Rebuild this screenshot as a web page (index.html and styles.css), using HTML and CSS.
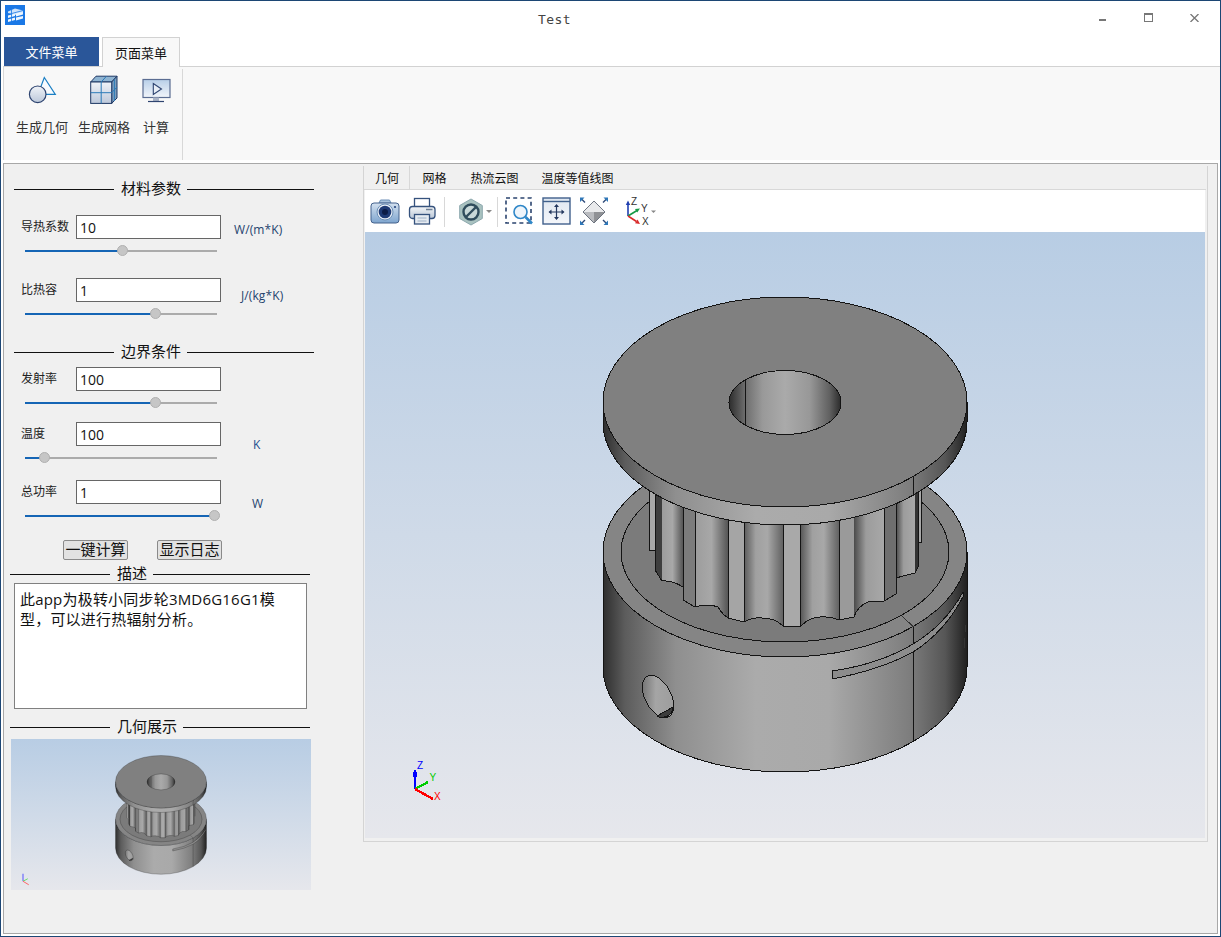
FILE: index.html
```html
<!DOCTYPE html>
<html lang="zh">
<head>
<meta charset="utf-8">
<title>Test</title>
<link rel="stylesheet" href="styles.css">
</head>
<body>
<div class="window">
  <header class="titlebar">
    <svg class="app-icon" width="20" height="20" viewBox="0 0 20 20">
      <rect width="20" height="20" fill="#1a78e6"/>
      <path d="M3 6.500L10 3.500L18 5.500V7.500L10 10L3 8z" fill="#cfe3fa"/>
      <path d="M3 10.500L10 8.500V11L3 13z" fill="#eef6fe"/>
      <path d="M11 8.500L18 7V9.500L11 11.500z" fill="#eef6fe"/>
      <path d="M3 14.500L10 12.500V15L3 17z" fill="#eef6fe"/>
      <path d="M11 12.500L18 11V13.500L11 15.500z" fill="#eef6fe"/>
      <path d="M6.500 5V17M3 9.500L18 5.500" stroke="#1a78e6" stroke-width=".8"/>
    </svg>
    <span class="title">Test</span>
    <div class="controls">
      <span class="ctl-min"></span>
      <span class="ctl-max"></span>
      <svg class="ctl-close" width="9" height="8" viewBox="0 0 9 8"><path d="M.5 0l8 8M8.5 0l-8 8" stroke="#777" stroke-width="1.3"/></svg>
    </div>
  </header>

  <nav class="menu-tabs">
    <span class="menu-file">文件菜单</span>
    <span class="menu-page">页面菜单</span>
  </nav>

  <section class="ribbon">
    <div class="ribbon-group">
      <div class="ribbon-btn btn-geo">
        <svg width="32" height="32" viewBox="0 0 32 32">
          <defs><linearGradient id="ribG" x1="0" y1="0" x2="0" y2="1"><stop offset="0" stop-color="#f0f3f8"/><stop offset="1" stop-color="#bcc8da"/></linearGradient></defs>
          <path d="M18.3 3.500L29.300 20.300H12z" fill="#f8fbfe" stroke="#1b7fc4" stroke-width="1.2"/>
          <circle cx="11.700" cy="20.300" r="8.300" fill="url(#ribG)" stroke="#2e4470" stroke-width="1.2"/>
        </svg>
        <span>生成几何</span>
      </div>
      <div class="ribbon-btn btn-mesh">
        <svg width="32" height="32" viewBox="0 0 32 32">
          <path d="M2.700 8L8 2.200H29L23.700 8z" fill="#8fb4d2" stroke="#1f3864"/>
          <path d="M23.700 8L29 2.200V24L23.700 29.400z" fill="#7c9dbd" stroke="#1f3864"/>
          <rect x="2.700" y="8" width="21" height="21.400" fill="url(#ribG)" stroke="#1f3864"/>
          <path d="M13.200 8V29.400M2.700 18.700H23.700M13.200 8L18.500 2.200M26.400 5.200V27M23.700 18.700L29 13" stroke="#2a7ab8" fill="none"/>
        </svg>
        <span>生成网格</span>
      </div>
      <div class="ribbon-btn btn-calc">
        <svg width="32" height="32" viewBox="0 0 32 32">
          <defs><linearGradient id="ribM" x1="0" y1="0" x2="0" y2="1"><stop offset="0" stop-color="#b8cfe8"/><stop offset="1" stop-color="#f2f5fa"/></linearGradient></defs>
          <rect x="3" y="5.500" width="27" height="18" fill="url(#ribM)" stroke="#5b6d92" stroke-width="1.2"/>
          <path d="M13.300 9.500L21.500 15L13.300 20.500z" fill="#e8eef6" stroke="#2e4470" stroke-width="1.1"/>
          <rect x="13" y="23.500" width="6" height="3.500" fill="#aab4c6"/>
          <path d="M8 27.500H24" stroke="#2e4470" stroke-width="1.2"/>
        </svg>
        <span>计算</span>
      </div>
    </div>
  </section>

  <main class="main">
    <aside class="side">
      <div class="head head-first"><i></i><b>材料参数</b><i></i></div>

      <div class="field f1">
        <label>导热系数</label>
        <input class="value" value="10">
        <span class="unit unit-wmk">W/(m*K)</span>
      </div>
      <div class="slider"><div class="fill" style="width:50.5%"></div><div class="thumb" style="left:50.5%"></div></div>

      <div class="field f2">
        <label>比热容</label>
        <input class="value" value="1">
        <span class="unit unit-jkg">J/(kg*K)</span>
      </div>
      <div class="slider"><div class="fill" style="width:67.7%"></div><div class="thumb" style="left:67.7%"></div></div>

      <div class="head head-second"><i></i><b>边界条件</b><i></i></div>

      <div class="field f3">
        <label>发射率</label>
        <input class="value" value="100">
      </div>
      <div class="slider"><div class="fill" style="width:67.7%"></div><div class="thumb" style="left:67.7%"></div></div>

      <div class="field f4">
        <label>温度</label>
        <input class="value" value="100">
        <span class="unit unit-k">K</span>
      </div>
      <div class="slider"><div class="fill" style="width:9.9%"></div><div class="thumb" style="left:9.9%"></div></div>

      <div class="field f5">
        <label>总功率</label>
        <input class="value" value="1">
        <span class="unit unit-w">W</span>
      </div>
      <div class="slider"><div class="fill" style="width:98.4%"></div><div class="thumb" style="left:98.4%"></div></div>

      <div class="actions">
        <button class="action">一键计算</button>
        <button class="action">显示日志</button>
      </div>

      <div class="head head-wide head-desc"><i></i><b>描述</b><i></i></div>
      <div class="desc">此app为极转小同步轮3MD6G16G1模<br>型，可以进行热辐射分析。</div>
      <div class="head head-wide head-geo"><i></i><b>几何展示</b><i></i></div>
      <div class="thumb-view">
        <svg class="thumb-svg" width="300" height="151" viewBox="185 231 1200 604" preserveAspectRatio="none">
          <use href="#pulley"/>
          <path d="M233 770V800" stroke="#55f" stroke-width="4" fill="none"/>
          <path d="M233 800L252 790" stroke="#6d6" stroke-width="4" fill="none"/>
          <path d="M233 800L256 814" stroke="#f66" stroke-width="4" fill="none"/>
        </svg>
      </div>
    </aside>

    <section class="frame">
      <div class="view-tabs">
        <span class="vt vt-active">几何</span>
        <span class="vt">网格</span>
        <span class="vt">热流云图</span>
        <span class="vt">温度等值线图</span>
      </div>
      <div class="toolbar">
        <svg class="ti ti-camera" width="30" height="30" viewBox="0 0 30 30">
          <defs><linearGradient id="camG" x1="0" y1="0" x2="0" y2="1"><stop offset="0" stop-color="#d4e1ef"/><stop offset="1" stop-color="#7ea5cf"/></linearGradient></defs>
          <path d="M9 6L10.500 3H19.500L21 6z" fill="#a9c2dc" stroke="#6c8fb6"/>
          <rect x="1" y="6" width="28" height="20" rx="3" fill="url(#camG)" stroke="#44628d"/>
          <circle cx="15" cy="15" r="8" fill="#e8eef6" stroke="#6c8fb6"/>
          <circle cx="15" cy="15" r="6.300" fill="#1e3a74"/>
          <circle cx="15" cy="15" r="3" fill="#0c1c46"/>
          <circle cx="25" cy="10" r="1.100" fill="#26457d"/>
        </svg>
        <svg class="ti ti-print" width="30" height="30" viewBox="0 0 30 30">
          <defs><linearGradient id="priG" x1="0" y1="0" x2="0" y2="1"><stop offset="0" stop-color="#f4f6f8"/><stop offset="1" stop-color="#b9c6d6"/></linearGradient></defs>
          <rect x="6.500" y="1.500" width="15" height="9" fill="#fff" stroke="#35527d" stroke-width="1.300"/>
          <rect x="1.500" y="9.500" width="25.500" height="12" rx="3" fill="url(#priG)" stroke="#35527d" stroke-width="1.300"/>
          <rect x="6.500" y="17.500" width="15" height="9.500" fill="#e6ebf1" stroke="#35527d" stroke-width="1.300"/>
          <path d="M9.500 21H18.500M9.500 24H18.500" stroke="#9db0c6"/>
          <path d="M18 12.500H24.500" stroke="#6f8097" stroke-width="1.500"/>
        </svg>
        <span class="tsep tsep-a"></span>
        <svg class="ti ti-hex" width="30" height="30" viewBox="0 0 30 30">
          <path d="M15 2L26.300 8.500V21.500L15 28L3.700 21.500V8.500z" fill="#a9c2c0" stroke="#8da8ae"/>
          <circle cx="15" cy="15" r="7.500" fill="#c8d8d8" stroke="#2f4c5c" stroke-width="2.400"/>
          <path d="M10 20L20 10" stroke="#2f4c5c" stroke-width="2.400"/>
        </svg>
        <span class="caret"></span>
        <span class="tsep tsep-b"></span>
        <svg class="ti ti-zoom" width="30" height="30" viewBox="0 0 30 30">
          <rect x="2" y="1" width="25" height="25" fill="none" stroke="#2b446f" stroke-width="1.600" stroke-dasharray="4 3.200"/>
          <circle cx="16.500" cy="15" r="6.500" fill="#eef5fb" stroke="#2f87c8" stroke-width="1.600"/>
          <path d="M21.500 20L28 26.500" stroke="#2f87c8" stroke-width="2.600"/>
        </svg>
        <svg class="ti ti-fit" width="30" height="30" viewBox="0 0 30 30">
          <defs><linearGradient id="fitG" x1="0" y1="0" x2="0" y2="1"><stop offset="0" stop-color="#dfe7f1"/><stop offset="1" stop-color="#f4f6fa"/></linearGradient></defs>
          <rect x="1" y="1" width="27" height="26" fill="url(#fitG)" stroke="#40608c" stroke-width="1.400"/>
          <path d="M1 4.500H28" stroke="#40608c" stroke-width="1.400"/>
          <path d="M14.500 8V22M7.500 15H21.500" stroke="#25385f" stroke-width="1.200"/>
          <path d="M14.500 7L12 10H17zM14.500 23L12 20H17zM6.500 15L9.500 12.500V17.500zM22.500 15L19.500 12.500V17.500z" fill="#25385f"/>
        </svg>
        <svg class="ti ti-dia" width="30" height="30" viewBox="0 0 30 30">
          <path d="M15 4L26 15H4z" fill="#e9eaec"/>
          <path d="M15 26L26 15L15 15z" fill="#8f9195"/>
          <path d="M15 26L4 15H15z" fill="#b9bbbf"/>
          <path d="M15 4L26 15L15 26L4 15z" fill="none" stroke="#6d7480"/>
          <path d="M2 1.500L6 5.500M28 1.500L24 5.500M2 27L6 23M28 27L24 23" stroke="#2e4a78" stroke-width="1.400"/>
          <path d="M1 .5H5.500L1 5zM29 .5H24.500L29 5zM1 28H5.500L1 23.500zM29 28H24.500L29 23.500z" fill="#2e77b8"/>
        </svg>
        <svg class="ti ti-axes" width="36" height="30" viewBox="0 0 36 30">
          <path d="M5 19V7" stroke="#1f3fb0" stroke-width="1.600"/><path d="M5 3.500L2.800 8H7.200z" fill="#1f3fb0"/>
          <path d="M5 19L14 13.500" stroke="#169a45" stroke-width="1.600"/><path d="M17 11.500L12 12L14.200 15.600z" fill="#169a45"/>
          <path d="M5 19L13.500 24.500" stroke="#d92b2b" stroke-width="1.600"/><path d="M17 27L14.600 22.600L12 26.200z" fill="#d92b2b"/>
          <text x="8" y="7.500" class="axis-lbl">Z</text><text x="18" y="15" class="axis-lbl">Y</text><text x="19" y="28" class="axis-lbl">X</text>
          <path d="M28 13.500H33L30.500 16z" fill="#888"/>
        </svg>
      </div>

      <div class="viewport">
        <svg class="scene" width="840" height="606" viewBox="365 232 840 606">
          <defs>
            <linearGradient id="gSide" gradientUnits="userSpaceOnUse" x1="603" y1="0" x2="967" y2="0">
              <stop offset="0" stop-color="#2e2e2e"/><stop offset=".06" stop-color="#5c5c5c"/><stop offset=".2" stop-color="#8f8f8f"/><stop offset=".42" stop-color="#ababab"/><stop offset=".62" stop-color="#a9a9a9"/><stop offset=".84" stop-color="#7e7e7e"/><stop offset=".94" stop-color="#565656"/><stop offset="1" stop-color="#202020"/>
            </linearGradient>
            <linearGradient id="gHole" x1="0" y1="0" x2="1" y2="0">
              <stop offset="0" stop-color="#2c2c2c"/><stop offset=".14" stop-color="#6c6c6c"/><stop offset=".3" stop-color="#999"/><stop offset=".5" stop-color="#aaa"/><stop offset=".72" stop-color="#989898"/><stop offset=".9" stop-color="#606060"/><stop offset="1" stop-color="#2a2a2a"/>
            </linearGradient>
            <linearGradient id="gGroove" x1="0" y1="0" x2="1" y2="0">
              <stop offset="0" stop-color="#5a5a5a"/><stop offset=".3" stop-color="#a0a0a0"/><stop offset=".6" stop-color="#a8a8a8"/><stop offset="1" stop-color="#626262"/>
            </linearGradient>
            <linearGradient id="gGrooveR" x1="0" y1="0" x2="1" y2="0">
              <stop offset="0" stop-color="#9c9c9c"/><stop offset=".5" stop-color="#a8a8a8"/><stop offset="1" stop-color="#555"/>
            </linearGradient>
            <linearGradient id="gGrooveL" x1="0" y1="0" x2="1" y2="0">
              <stop offset="0" stop-color="#4a4a4a"/><stop offset=".4" stop-color="#9c9c9c"/><stop offset="1" stop-color="#a8a8a8"/>
            </linearGradient>
            <linearGradient id="gDril" x1="0" y1="0" x2="1" y2="1">
              <stop offset="0" stop-color="#5e5e5e"/><stop offset=".45" stop-color="#a5a5a5"/><stop offset="1" stop-color="#9a9a9a"/>
            </linearGradient>
            <clipPath id="cTeeth">
              <path d="M655 470V570L662 581Q672 580 683 587V600L695 607Q708 603 718 607Q722 614 728 618L744 622Q752 617 762 618Q775 618 783 626H801Q810 617 820 617Q830 616 839 620L854 617Q857 606 870 601H884L896 594V578Q906 575 915 573L918 567V470z"/>
            </clipPath>
          </defs>

          <g id="pulley">
            <path d="M603 552V667A182 105 0 0 0 967 667V552A182 105 0 0 1 603 552z" fill="url(#gSide)" stroke="#141414"/>
            <path d="M913.500 627V741" stroke="#141414" fill="none"/>
            <path d="M832 671Q880 664 913 644Q945 625 963 592L964 595Q945 632 913 652Q880 670 832 679z" fill="#8c8c8c" stroke="#141414"/>
            <path d="M965 625V632M964 638V648" stroke="#333" fill="none"/>
            <ellipse cx="658" cy="696.500" rx="13" ry="23" transform="rotate(-28 658 696.500)" fill="url(#gDril)" stroke="#141414"/>
            <path d="M657 716L673 707Q672 716 664 717Q660 718 657 716z" fill="#3c3c3c" stroke="#141414"/>

            <ellipse cx="785" cy="552" rx="182" ry="105" fill="#858585" stroke="#141414"/>
            <ellipse cx="785" cy="552" rx="164" ry="90" fill="#7b7b7b" stroke="#141414"/>
            <path d="M902 616L913.500 627" stroke="#333" fill="none"/>

            <rect x="649" y="480" width="6" height="70" fill="#a8a8a8" stroke="#141414"/>
            <rect x="918" y="480" width="3" height="62" fill="#a8a8a8" stroke="#141414"/>

            <g clip-path="url(#cTeeth)">
              <rect x="655" y="470" width="7" height="160" fill="#3e3e3e"/>
              <rect x="662" y="470" width="21" height="160" fill="url(#gGrooveR)"/>
              <rect x="683" y="470" width="12" height="160" fill="#7c7c7c"/>
              <rect x="695" y="470" width="33" height="160" fill="url(#gGrooveR)"/>
              <rect x="728" y="470" width="16" height="160" fill="#a5a5a5"/>
              <rect x="744" y="470" width="39" height="160" fill="url(#gGroove)"/>
              <rect x="783" y="470" width="18" height="160" fill="#a9a9a9"/>
              <rect x="801" y="470" width="38" height="160" fill="url(#gGroove)"/>
              <rect x="839" y="470" width="15" height="160" fill="#9a9a9a"/>
              <rect x="854" y="470" width="30" height="160" fill="url(#gGrooveL)"/>
              <rect x="884" y="470" width="12" height="160" fill="#6f6f6f"/>
              <rect x="896" y="470" width="19" height="160" fill="url(#gGrooveL)"/>
              <rect x="915" y="470" width="3" height="160" fill="#333"/>
            </g>
            <path d="M655 470V570L662 581Q672 580 683 587V600L695 607Q708 603 718 607Q722 614 728 618L744 622Q752 617 762 618Q775 618 783 626H801Q810 617 820 617Q830 616 839 620L854 617Q857 606 870 601H884L896 594V578Q906 575 915 573L918 567V470" fill="none" stroke="#141414"/>
            <path d="M683.500 470V600M695.500 470V607M728.500 470V618M744.500 470V622M783.500 470V626M800.500 470V626M839.500 470V620M884.500 470V601M896.500 470V594" fill="none" stroke="#141414"/>

            <path d="M603 402V422A182 103 0 0 0 967 422V402A182 105 0 0 1 603 402z" fill="url(#gSide)" stroke="#141414"/>
            <path d="M913.500 476V496" stroke="#141414" fill="none"/>
            <ellipse cx="785" cy="402" rx="182" ry="105" fill="#808080" stroke="#141414"/>
            <ellipse cx="785" cy="402.500" rx="56" ry="32" fill="url(#gHole)" stroke="#141414"/>
            <path d="M745.500 380V425" stroke="#141414" fill="none"/>
          </g>

          <g class="axes">
            <path d="M415 789V770" stroke="#00f" stroke-width="2.400" fill="none"/>
            <path d="M413 777H417V772H413z" fill="#00f"/>
            <path d="M415 789L428 782" stroke="#0c0" stroke-width="2.400" fill="none"/>
            <path d="M415 789L433 799" stroke="#f00" stroke-width="2.400" fill="none"/>
            <text x="417" y="769" class="scene-lbl lbl-z">Z</text>
            <text x="429.500" y="781" class="scene-lbl lbl-y">Y</text>
            <text x="434" y="800" class="scene-lbl lbl-x">X</text>
          </g>
        </svg>
      </div>
    </section>
  </main>
</div>
</body>
</html>
```
FILE: styles.css
```css
* { box-sizing: border-box; }
html, body { margin: 0; height: 100%; }
body {
  font-family: "Noto Sans CJK SC", "Liberation Sans", sans-serif;
  background: #fff;
  overflow: hidden;
}
.window {
  width: 1221px;
  height: 937px;
  border: 1px solid #1c4674;
  display: flex;
  flex-direction: column;
  background: #fff;
}

/* title bar */
.titlebar {
  height: 36px;
  flex: none;
  display: flex;
  align-items: flex-start;
  padding-top: 4px;
  padding-left: 4px;
}
.app-icon { display: block; flex: none; }
.title {
  margin-left: 513px;
  margin-top: 7px;
  font: 13px/16px "DejaVu Sans Mono", monospace;
  letter-spacing: .4px;
  color: #444;
}
.controls {
  margin-left: auto;
  display: flex;
  align-items: flex-start;
  padding-top: 8px;
  padding-right: 21px;
}
.ctl-min { width: 7px; height: 2px; background: #777; margin-top: 6px; }
.ctl-max { width: 9px; height: 9px; border: 1px solid #777; border-top-width: 2px; margin-left: 38px; }
.ctl-close { margin-left: 37px; margin-top: 1px; display: block; }

/* menu tabs */
.menu-tabs {
  height: 29px;
  flex: none;
  display: flex;
  align-items: flex-start;
  padding-left: 3px;
  font-size: 13px;
}
.menu-file {
  width: 95px;
  height: 29px;
  background: #2a5699;
  color: #fff;
  line-height: 29px;
  text-align: center;
}
.menu-page {
  width: 78px;
  height: 30px;
  margin-left: 3px;
  background: #f8f8f8;
  border: 1px solid #d2d2d2;
  border-bottom: 0;
  color: #111;
  line-height: 29px;
  text-align: center;
  position: relative;
  z-index: 1;
}

/* ribbon */
.ribbon {
  height: 94px;
  flex: none;
  margin-left: 2px;
  background: #f8f8f8;
  border-top: 1px solid #d2d2d2;
  border-left: 1px solid #d8d8d8;
  display: flex;
}
.ribbon-group {
  width: 179px;
  height: 91px;
  margin-top: 2px;
  border-right: 1px solid #d8d8d8;
  display: flex;
  padding-left: 12px;
  padding-top: 5px;
}
.ribbon-btn {
  display: flex;
  flex-direction: column;
  align-items: center;
  font-size: 13px;
  color: #333;
}
.ribbon-btn svg { display: block; }
.ribbon-btn span { margin-top: 12px; line-height: 18px; white-space: nowrap; }
.btn-geo, .btn-mesh { width: 52px; }
.btn-mesh { margin-left: 10px; }
.btn-calc { width: 26px; margin-left: 13px; }

/* main */
.main {
  flex: 1;
  margin: 3px 2px 2px;
  border: 1px solid #a8a8a8;
  background: #f0f0f0;
  display: flex;
  min-height: 0;
}

/* left column */
.side {
  flex: 0 0 359px;
  width: 359px;
}
.head {
  display: flex;
  align-items: center;
  height: 20px;
  margin-left: 10px;
  width: 300px;
  font-size: 15px;
  color: #111;
}
.head i { display: block; height: 1px; background: #111; flex: 1; }
.head i:first-child { flex: 0 0 100px; }
.head b { font-weight: 400; padding: 0 6px 2px 7px; white-space: nowrap; line-height: 20px; }
.head-first { margin-top: 15px; }
.head-second { margin-top: 27px; }
.head-wide { margin-left: 6px; }
.head-desc { margin-top: 4px; }
.head-geo { margin-top: 8px; }

.field {
  display: flex;
  align-items: flex-start;
  margin-left: 17px;
  height: 24px;
}
.field label {
  flex: 0 0 55px;
  font-size: 12px;
  line-height: 20px;
  color: #222;
  margin-top: 1px;
  white-space: nowrap;
}
.value {
  flex: 0 0 145px;
  width: 145px;
  height: 24px;
  border: 1px solid #666;
  background: #fff;
  padding: 1px 3px;
  font: 14px/20px "Open Sans", "Noto Sans CJK SC", sans-serif;
  color: #111;
  outline: 0;
  border-radius: 0;
}
.unit { font: 12px/16px "Open Sans", "Noto Sans CJK SC", sans-serif; color: #24436e; white-space: nowrap; letter-spacing: .1px; }
.unit-wmk { margin-left: 13px; margin-top: 7px; }
.unit-jkg { margin-left: 20px; margin-top: 10px; }
.unit-k { margin-left: 32px; margin-top: 15px; color: #1f4f8f; }
.unit-w { margin-left: 31px; margin-top: 16px; }
.f1 { margin-top: 16px; }
.f2 { margin-top: 26px; }
.f3 { margin-top: 5px; }
.f4 { margin-top: 18px; }
.f5 { margin-top: 21px; }

.slider {
  position: relative;
  height: 2px;
  width: 192px;
  margin: 11px 0 0 21px;
  background: #ababab;
}
.fill { height: 2px; background: #1565b5; }
.thumb {
  position: absolute;
  top: -5px;
  width: 11px;
  height: 11px;
  margin-left: -5px;
  border-radius: 50%;
  background: #c6c6c6;
  border: 1px solid #b0b0b0;
}

.actions {
  display: flex;
  margin: 23px 0 0 59px;
  gap: 29px;
}
.action {
  width: 65px;
  height: 20px;
  padding: 0 0 2px;
  border: 1px solid #8a8a8a;
  border-radius: 2px;
  background: #e2e2e2;
  font: 15px/16px "Noto Sans CJK SC", "Liberation Sans", sans-serif;
  color: #111;
  white-space: nowrap;
}
.desc {
  margin: -1px 0 0 10px;
  width: 293px;
  height: 126px;
  border: 1px solid #808080;
  background: #fff;
  padding: 5px 5px;
  font: 15px/20px "Open Sans", "Noto Sans CJK SC", sans-serif;
  letter-spacing: .2px;
  color: #111;
}
.thumb-view {
  margin: 2px 0 0 7px;
  width: 300px;
  height: 151px;
  background: linear-gradient(180deg, #b8cde4 0%, #e6e7ec 100%);
}
.thumb-svg { display: block; }

/* right column */
.frame {
  width: 845px;
  height: 676px;
  margin-top: 2px;
  border: 1px solid #d4d4d4;
  border-top: 0;
  padding: 0 1px 3px 0;
  display: flex;
  flex-direction: column;
}
.view-tabs {
  height: 24px;
  flex: none;
  display: flex;
  font-size: 12px;
  line-height: 23px;
  color: #111;
  border-bottom: 1px solid #d8d8d8;
}
.vt { padding: 0 11.500px; white-space: nowrap; }
.vt-active { border-right: 1px solid #d8d8d8; padding: 0 10.500px 0 11px; width: 46px; margin-right: 1px; }
.vt:nth-child(3) { margin-left: 1px; }
.toolbar {
  height: 42px;
  flex: none;
  margin-left: 1px;
  margin-right: 1px;
  background: #fff;
  display: flex;
  align-items: flex-start;
  padding: 7px 0 0 5px;
}
.ti { display: block; flex: none; }
.ti-print { margin-left: 8px; }
.tsep { display: block; width: 1px; height: 30px; background: #d8d8d8; flex: none; }
.tsep-a { margin-left: 6px; }
.ti-hex { margin-left: 11px; }
.caret {
  width: 0; height: 0; flex: none;
  margin: 13px 0 0 0;
  border-left: 3px solid transparent;
  border-right: 3px solid transparent;
  border-top: 3px solid #888;
}
.tsep-b { margin-left: 5px; }
.ti-zoom { margin-left: 6px; }
.ti-fit { margin-left: 8px; }
.ti-dia { margin-left: 7px; }
.ti-axes { margin-left: 14px; }
.axis-lbl { font: 10px "Liberation Sans", sans-serif; fill: #333; }

.viewport {
  width: 840px;
  height: 606px;
  margin-left: 1px;
  flex: none;
  background: linear-gradient(180deg, #b8cde4 0%, #e6e7ec 100%);
}
.scene { display: block; shape-rendering: crispEdges; }
.scene-lbl { font: 10px "Liberation Sans", sans-serif; }
.lbl-z { fill: #00f; }
.lbl-y { fill: #0c0; }
.lbl-x { fill: #f00; }
```
